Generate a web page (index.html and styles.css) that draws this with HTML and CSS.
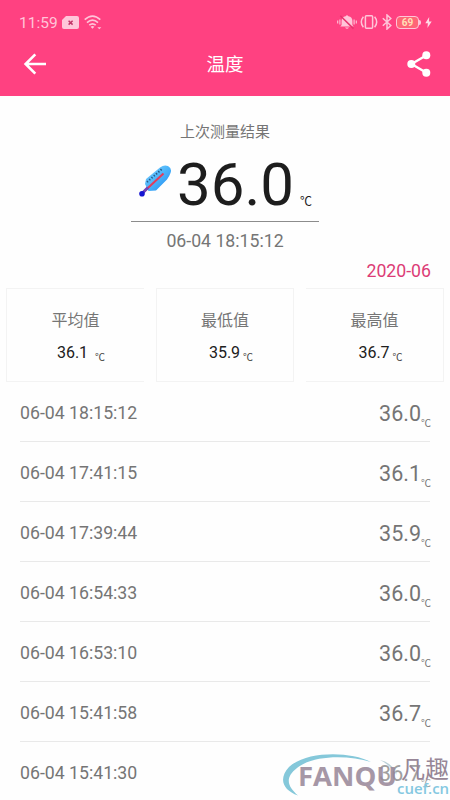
FILE: index.html
```html
<!DOCTYPE html>
<html lang="zh-CN">
<head>
<meta charset="utf-8">
<title>温度</title>
<link rel="stylesheet" href="styles.css">
</head>
<body>
<div class="screen">
  <header class="header">
    <div class="status">
      <span class="clock">11:59</span>
      <svg class="sim" width="17" height="13" viewBox="0 0 17 13"><path d="M4 0H15Q17 0 17 2V11Q17 13 15 13H2Q0 13 0 11V4Z" fill="#ffc5d9"/><path d="M6.6 4.8l4 3.800M10.600 4.800l-4 3.800" stroke="#c23468" stroke-width="1.500"/></svg>
      <svg class="wifi" width="18" height="15" viewBox="0 0 18 15" fill="none" stroke="#ffc5d9" stroke-width="1.6"><path d="M.7 4.6Q8.5-2.5 16.3 4.6M3 7.6Q8.5 2.6 14 7.6M5.3 10.2Q8.5 7.4 11.7 10.2"/><path d="M6.6 11.7Q8.5 10.3 10.4 11.7L8.5 13.8Z" fill="#ffc5d9" stroke="none"/><path d="M13.3 12.2h4l-2 2z" fill="#ffc5d9" stroke="none"/></svg>
      <span class="spacer"></span>
      <svg class="mute" width="20" height="16" viewBox="0 0 20 16"><path d="M4.600 11V7Q4.600 3 8.600 2.300Q10 .4 11.400 2.300Q15.400 3 15.400 7v4l1.300 1.600H3.300ZM8 13.500h4Q10 16 8 13.500" fill="#ffc5d9"/><path d="M3.300 1.800L16.500 14.600" stroke="#e8336f" stroke-width="1.500"/><path d="M.7 6.500v3M2.900 5.500v5M17.100 5.500v5M19.300 6.500v3" stroke="#ffc5d9" stroke-width="1.100"/></svg>
      <svg class="vibrate" width="18" height="14" viewBox="0 0 18 14" fill="none" stroke="#ffc5d9" stroke-width="1.5"><rect x="5.400" y=".8" width="7.200" height="12.400" rx="1"/><path d="M3.400 1.800Q-.8 7 3.400 12.200M14.600 1.800Q18.800 7 14.600 12.200"/></svg>
      <svg class="bluetooth" width="10" height="16" viewBox="0 0 10 16" fill="none" stroke="#ffc5d9" stroke-width="1.500"><path d="M.8 4.300L8.800 11.500L5 15V1L8.800 4.500L.8 11.700"/></svg>
      <span class="battery">69</span>
      <svg class="bolt" width="7" height="11" viewBox="0 0 7 11"><path d="M4.200 0L.3 6.200h2.600L2.400 11L6.700 4.400H4Z" fill="#ffd9e6"/></svg>
    </div>
    <div class="toolbar">
      <svg width="24" height="24" viewBox="0 0 24 24" fill="none" stroke="#fff" stroke-width="2.600"><path d="M12.300 2.300L2.600 12L12.300 21.700M2.800 12H23"/></svg>
      <h1 class="title">温度</h1>
      <svg width="24" height="26" viewBox="0 0 24 26"><path d="M19.500 4.200L4.500 13L19.500 21.800" fill="none" stroke="#fff" stroke-width="2.400"/><g fill="#fff"><circle cx="19.300" cy="4.300" r="4"/><circle cx="4.300" cy="13" r="4"/><circle cx="19.300" cy="21.700" r="4"/></g></svg>
    </div>
  </header>
  <main>
    <section class="latest">
      <p class="label">上次测量结果</p>
      <div class="reading">
        <svg class="thermometer" width="34" height="34" viewBox="0 0 34 34"><defs><linearGradient id="blue" x1="0" y1="0" x2="1" y2="1"><stop offset="0" stop-color="#8ad4fc"/><stop offset=".5" stop-color="#4ab4fa"/><stop offset="1" stop-color="#1c84f0"/></linearGradient></defs><path d="M7 20L8 15L22 3.500Q26 .3 30 2Q34.300 4.500 32.500 9Q31.500 12 29 15.500L18 26.500L10.500 27Z" fill="url(#blue)"/><path d="M5 28.500L25.500 9.500" stroke="#e33c5b" stroke-width="2"/><path d="M3.500 30L10 23.500" stroke="#7046ba" stroke-width="3"/><circle cx="4" cy="29.700" r="2.800" fill="#1515d2"/><path d="M9 18L24 5" stroke="#255987" stroke-width="2" stroke-dasharray="1.300 1.700"/></svg>
        <span class="big">36.0</span><span class="unit">℃</span>
      </div>
      <p class="when">06-04 18:15:12</p>
    </section>
    <p class="month">2020-06</p>
    <section class="stats">
      <div class="card first"><h2>平均值</h2><p class="wide">36.1<span>℃</span></p></div>
      <div class="card"><h2>最低值</h2><p>35.9<span>℃</span></p></div>
      <div class="card last"><h2>最高值</h2><p>36.7<span>℃</span></p></div>
    </section>
    <ul class="history">
      <li><time>06-04 18:15:12</time><b>36.0</b><i>℃</i></li>
      <li><time>06-04 17:41:15</time><b>36.1</b><i>℃</i></li>
      <li><time>06-04 17:39:44</time><b>35.9</b><i>℃</i></li>
      <li><time>06-04 16:54:33</time><b>36.0</b><i>℃</i></li>
      <li><time>06-04 16:53:10</time><b>36.0</b><i>℃</i></li>
      <li><time>06-04 15:41:58</time><b>36.7</b><i>℃</i></li>
      <li class="faded"><time>06-04 15:41:30</time><b>36.7</b><i>℃</i></li>
    </ul>
  </main>
  <div class="watermark">
    <svg width="180" height="50" viewBox="0 0 180 50"><path d="M28 45.500C13 40 8 29 19 17C36 1 80 1 101 12C78 5 43 5 27 18C14 28 18 37 28 45.500Z" fill="#85c8da"/><path d="M110 10Q123 13 127 25Q120 15 110 10" fill="#b9cfd6"/></svg>
    <span class="brand">FANQU</span>
    <span class="brand-cn">凡趣</span>
    <span class="domain">cuef.cn</span>
  </div>
</div>
</body>
</html>
```
FILE: styles.css
```css
* { box-sizing: border-box; }
body, h1, h2, p, ul { margin: 0; padding: 0; }
body {
  background: #fefefe;
  font-family: Roboto, "Noto Sans CJK SC", sans-serif;
  color: #757575;
}
svg { display: block; flex: none; }
.screen { position: relative; width: 450px; height: 800px; overflow: hidden; }

.header { height: 96px; background: #ff4181; }
.status { display: flex; align-items: center; height: 44px; padding: 0 18px 0 19px; }
.clock { font-size: 15.500px; line-height: 20px; color: #ffc5d9; width: 43px; padding-top: 1px; }
.wifi { margin-left: 5px; }
.spacer { flex: 1; }
.mute { margin-right: -1px; }
.vibrate { margin-left: 4px; }
.bluetooth { margin-left: 4px; }
.battery {
  position: relative;
  width: 23px;
  height: 13px;
  margin: 0 6px 0 4px;
  border: 1px solid #ffc5d9;
  border-radius: 4px;
  font-size: 10px;
  font-weight: 700;
  line-height: 12px;
  text-align: center;
  color: #ffe0b8;
  background: #ff6577;
}
.battery::after { content: ""; position: absolute; right: -3px; top: 3px; width: 2px; height: 5px; border-radius: 0 2px 2px 0; background: #ffc5d9; }

.toolbar { display: flex; align-items: center; justify-content: space-between; height: 40px; padding: 0 19px 0 23px; }
.title { font-size: 18.500px; font-weight: 400; line-height: 28px; color: #fff; padding: 2px 4px 0 0; }

.latest { display: flex; flex-direction: column; align-items: center; padding-top: 25px; }
.label { font-size: 15px; line-height: 22px; }
.reading { display: flex; width: 188px; height: 79px; border-bottom: 1px solid #8c8c8c; padding: 9px 0 0 7px; }
.thermometer { margin-top: 12px; }
.big { font-size: 60px; line-height: 66px; color: #1d1d1d; margin-left: 5px; }
.unit { font-size: 12px; line-height: 18px; color: #1d1d1d; margin: 41px 0 0 6px; }
.when { font-size: 17.700px; line-height: 24px; margin-top: 7px; }
.month { font-size: 17.700px; line-height: 24px; margin-top: 6px; padding-right: 19px; text-align: right; color: #dc3c76; }

.stats { display: grid; grid-template-columns: repeat(3, 138px); justify-content: space-between; padding: 0 6px; margin-top: 5px; }
.card { height: 94px; border: 1px solid #f3f3f3; text-align: center; padding-top: 20px; }
.first { border-right: 0; }
.last { border-left: 0; }
.card h2 { font-size: 16px; font-weight: 400; line-height: 24px; }
.card p { display: flex; justify-content: center; font-size: 16px; line-height: 22px; margin-top: 9px; padding-left: 12px; color: #202020; }
.card p span { font-size: 10px; line-height: 16px; margin: 8px 0 0 3px; color: #444; }
.card .wide { padding-left: 11px; }
.card .wide span { margin-left: 7px; }

.history { list-style: none; padding: 0 20px; }
.history li { display: flex; align-items: flex-start; height: 60px; border-bottom: 1px solid #e9e9e9; padding-top: 18px; }
.history time { flex: 1; font-size: 17.700px; line-height: 26px; }
.history b { font-size: 21.500px; font-weight: 400; line-height: 28px; }
.history i { font-size: 10px; font-style: normal; line-height: 16px; margin: 16px -1px 0 0; }
.history .faded b, .history .faded i { color: #a0a0a0; }

.watermark { position: absolute; left: 270px; top: 750px; width: 180px; height: 50px; }
.watermark span { position: absolute; white-space: nowrap; }
.watermark .brand { left: 28px; top: 9px; font: 700 27.500px/34px "Open Sans", sans-serif; color: #978697; opacity: .85; }
.watermark .brand-cn { left: 131px; top: 3px; font-size: 24px; line-height: 34px; color: #978697; }
.watermark .domain { left: 127px; top: 28px; font: 600 15px/20px "Open Sans", sans-serif; color: #85c8e1; }
```
